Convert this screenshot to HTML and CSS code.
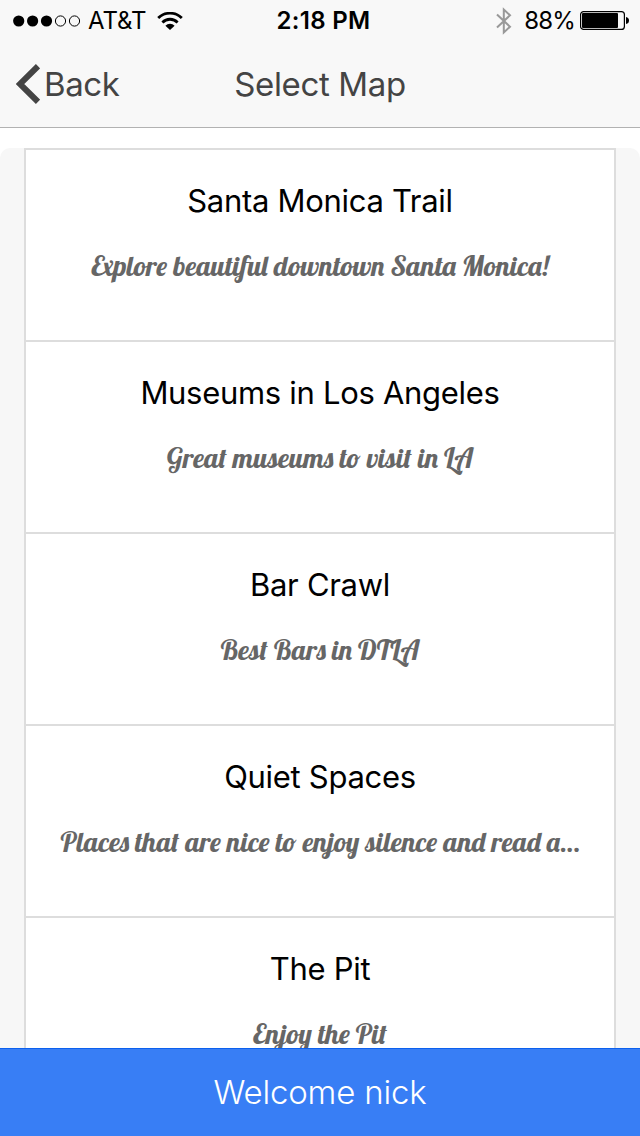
FILE: index.html
```html
<!DOCTYPE html>
<html lang="en">
<head>
<meta charset="utf-8">
<title>Select Map</title>
<link rel="stylesheet" href="styles.css">
</head>
<body>
<div class="app">
  <header class="header">
    <div class="status">
      <div class="status-left">
        <svg class="signal" width="68" height="12" viewBox="0 0 68 12"><g fill="#000"><circle cx="5.7" cy="6" r="5.6"/><circle cx="19.6" cy="6" r="5.6"/><circle cx="33.5" cy="6" r="5.6"/></g><g fill="none" stroke="#000"><circle cx="47.5" cy="6" r="5.1"/><circle cx="61.5" cy="6" r="5.1"/></g></svg>
        <span class="carrier">AT&amp;T</span>
        <svg class="wifi" width="26" height="18" viewBox="0 0 26 18"><g fill="none" stroke="#000" stroke-width="2.8"><path d="M1.2 6.1a16.7 16.7 0 0 1 23.6 0"/><path d="M5.4 10.4a10.8 10.8 0 0 1 15.2 0"/></g><path d="M8.4 13.7a6.5 6.5 0 0 1 9.2 0L13 18z"/></svg>
      </div>
      <span class="time">2:18 PM</span>
      <div class="status-right">
        <svg class="bluetooth" width="16" height="28" viewBox="0 0 16 28"><path d="M1 7.5l13 12.2-6.2 5.8v-23L14 8.3 1 20.5" fill="none" stroke="#999" stroke-width="2"/></svg>
        <span class="percent">88%</span>
        <svg class="battery" width="49" height="20" viewBox="0 0 49 20"><rect x=".6" y=".6" width="43.8" height="17.8" rx="3" fill="none" stroke="#000" stroke-width="1.2"/><rect x="2" y="2" width="36" height="15" rx="1"/><path d="M46 6q3 .5 3 3.5t-3 3.5z"/></svg>
      </div>
    </div>
    <div class="nav">
      <div class="back"><svg class="chevron" width="24" height="40" viewBox="0 0 24 40"><path d="M22 2.2L3.9 20 22 37.8" fill="none" stroke="#444" stroke-width="6"/></svg><span class="back-label">Back</span></div>
      <h1 class="title">Select Map</h1>
      <div></div>
    </div>
  </header>
  <main class="content">
    <div class="panel">
      <ul class="list">
        <li class="item"><h2 class="name">Santa Monica Trail</h2><p class="desc">Explore beautiful downtown Santa Monica!</p></li>
        <li class="item"><h2 class="name">Museums in Los Angeles</h2><p class="desc">Great museums to visit in LA</p></li>
        <li class="item"><h2 class="name">Bar Crawl</h2><p class="desc">Best Bars in DTLA</p></li>
        <li class="item"><h2 class="name">Quiet Spaces</h2><p class="desc">Places that are nice to enjoy silence and read a…</p></li>
        <li class="item"><h2 class="name">The Pit</h2><p class="desc">Enjoy the Pit</p></li>
      </ul>
    </div>
  </main>
  <footer class="footer"><span class="welcome">Welcome nick</span></footer>
</div>
</body>
</html>
```
FILE: styles.css
```css
* { box-sizing: border-box; }
body { margin: 0; background: #fff; font-family: Inter, "Liberation Sans", sans-serif; }
svg { display: block; flex: none; }
h1, h2, p, ul { margin: 0; padding: 0; font-weight: 400; }
.app { display: flex; flex-direction: column; height: 1136px; overflow: hidden; }
.header { flex: none; height: 128px; background: #f8f8f8; border-bottom: 1px solid #b2b2b2; }
.status { display: grid; grid-template-columns: 1fr auto 1fr; height: 42px; align-items: center; padding: 0 11px 0 13px; font-size: 24px; line-height: 42px; }
.status-left, .status-right { display: flex; align-items: center; height: 42px; }
.status-right { justify-content: flex-end; }
.carrier { margin-left: 7px; letter-spacing: -0.1px; }
.wifi { margin-left: 11px; }
.time { font-weight: 600; letter-spacing: 0.3px; padding-left: 5px; }
.percent { margin: 0 5px 0 12px; letter-spacing: -0.8px; }
.nav { display: grid; grid-template-columns: 1fr auto 1fr; align-items: center; height: 84px; padding: 0 16px; color: #444; font-size: 33px; line-height: 84px; }
.back { display: flex; align-items: center; height: 84px; }
.back-label { margin-left: 4px; letter-spacing: -0.4px; }
.title { font-size: 33px; letter-spacing: -0.35px; }
.content { flex: 1; min-height: 0; overflow: hidden; padding-top: 20px; }
.panel { background: #f7f7f7; border-radius: 10px 10px 0 0; padding: 0 24px; }
.list { list-style: none; background: #fff; border: 2px solid #ddd; }
.item { display: flex; flex-direction: column; align-items: center; height: 192px; padding-top: 30px; border-bottom: 2px solid #ddd; }
.name { font-size: 31px; line-height: 42px; letter-spacing: -0.3px; white-space: nowrap; }
.desc { margin-top: 25px; color: #666; font: 400 28px/38px "Lobster", "Liberation Serif", serif; white-space: nowrap; }
.footer { flex: none; height: 88px; display: flex; justify-content: center; background: #387ef5; border-top: 1px solid #0c60ee; color: #fff; }
.welcome { font-size: 33px; line-height: 87px; font-weight: 300; letter-spacing: -0.2px; }
```
